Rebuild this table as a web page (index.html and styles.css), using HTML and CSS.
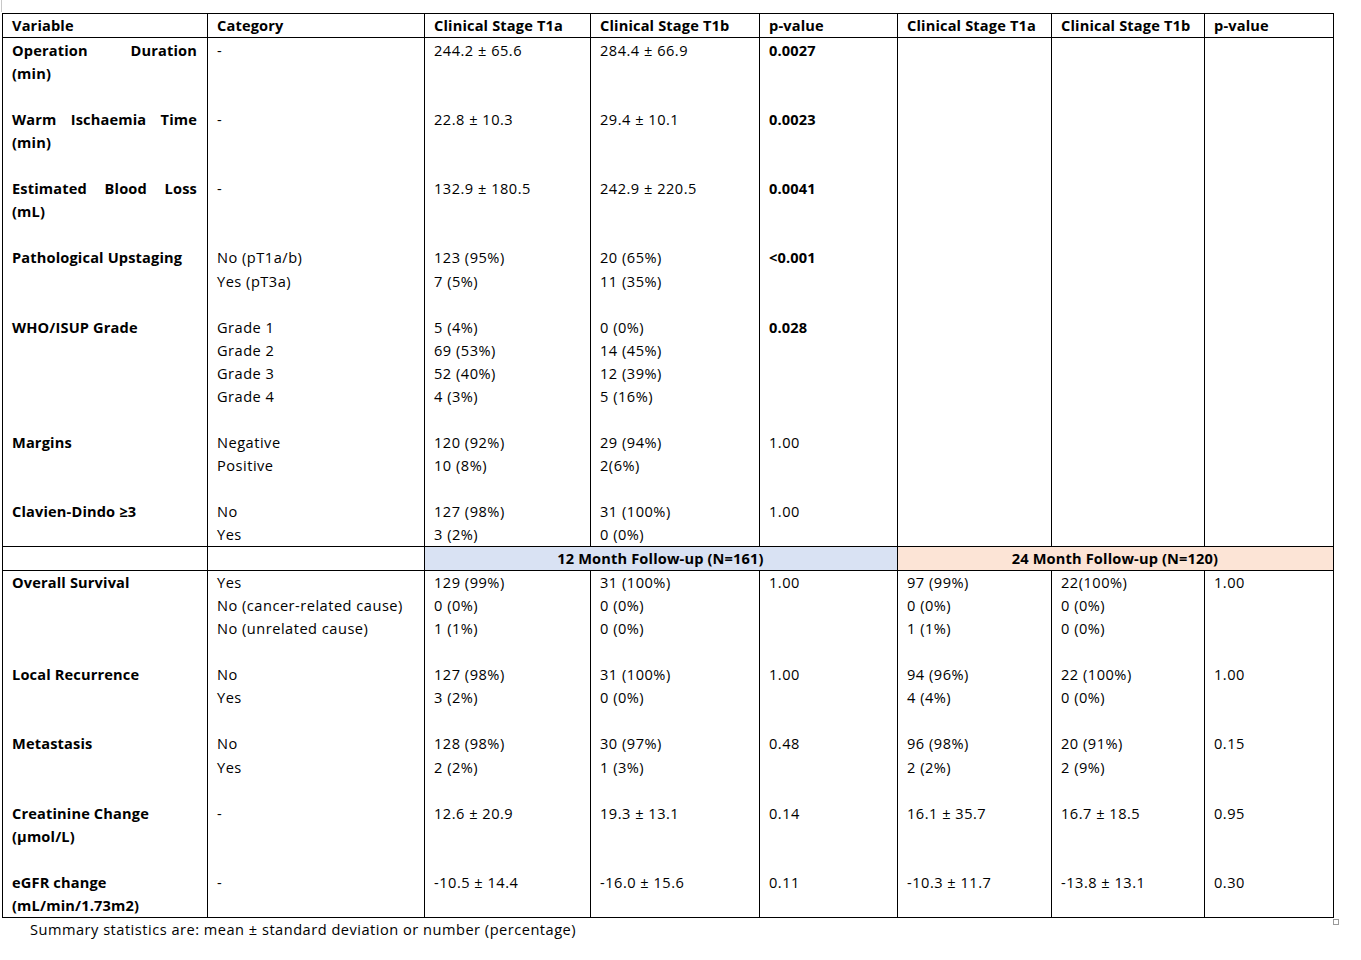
FILE: index.html
```html
<!DOCTYPE html>
<html lang="en">
<head>
<meta charset="utf-8">
<title>Table</title>
<link rel="stylesheet" href="styles.css">
</head>
<body>
<div class="page">
  <div class="edge-mark"></div>
  <div class="table-wrap">
    <table class="stats">
      <colgroup>
        <col class="c-var"><col class="c-cat"><col class="c-a"><col class="c-b"><col class="c-p">
        <col class="c-a2"><col class="c-b2"><col class="c-p2">
      </colgroup>
      <thead>
        <tr class="head">
          <th>Variable</th><th>Category</th><th>Clinical Stage T1a</th><th>Clinical Stage T1b</th><th>p-value</th>
          <th>Clinical Stage T1a</th><th>Clinical Stage T1b</th><th>p-value</th>
        </tr>
      </thead>
      <tbody>
        <tr class="gap first">
          <td class="var"><span class="jline">Operation Duration</span>(min)</td><td>-</td><td>244.2 ± 65.6</td><td>284.4 ± 66.9</td><td class="b">0.0027</td><td></td><td></td><td></td>
        </tr>
        <tr class="gap">
          <td class="var"><span class="jline">Warm Ischaemia Time</span>(min)</td><td>-</td><td>22.8 ± 10.3</td><td>29.4 ± 10.1</td><td class="b">0.0023</td><td></td><td></td><td></td>
        </tr>
        <tr class="gap">
          <td class="var"><span class="jline">Estimated Blood Loss</span>(mL)</td><td>-</td><td>132.9 ± 180.5</td><td>242.9 ± 220.5</td><td class="b">0.0041</td><td></td><td></td><td></td>
        </tr>
        <tr class="gap">
          <td class="var">Pathological Upstaging</td><td>No (pT1a/b)<br>Yes (pT3a)</td><td>123 (95%)<br>7 (5%)</td><td>20 (65%)<br>11 (35%)</td><td class="b">&lt;0.001</td><td></td><td></td><td></td>
        </tr>
        <tr class="gap">
          <td class="var">WHO/ISUP Grade</td><td>Grade 1<br>Grade 2<br>Grade 3<br>Grade 4</td><td>5 (4%)<br>69 (53%)<br>52 (40%)<br>4 (3%)</td><td>0 (0%)<br>14 (45%)<br>12 (39%)<br>5 (16%)</td><td class="b">0.028</td><td></td><td></td><td></td>
        </tr>
        <tr class="gap">
          <td class="var">Margins</td><td>Negative<br>Positive</td><td>120 (92%)<br>10 (8%)</td><td>29 (94%)<br>2(6%)</td><td>1.00</td><td></td><td></td><td></td>
        </tr>
        <tr>
          <td class="var">Clavien-Dindo ≥3</td><td>No<br>Yes</td><td>127 (98%)<br>3 (2%)</td><td>31 (100%)<br>0 (0%)</td><td>1.00</td><td></td><td></td><td></td>
        </tr>
        <tr class="follow">
          <td></td><td></td>
          <td colspan="3" class="fu12">12 Month Follow-up (N=161)</td>
          <td colspan="3" class="fu24">24 Month Follow-up (N=120)</td>
        </tr>
        <tr class="gap">
          <td class="var">Overall Survival</td><td>Yes<br>No (cancer-related cause)<br>No (unrelated cause)</td><td>129 (99%)<br>0 (0%)<br>1 (1%)</td><td>31 (100%)<br>0 (0%)<br>0 (0%)</td><td>1.00</td><td>97 (99%)<br>0 (0%)<br>1 (1%)</td><td>22(100%)<br>0 (0%)<br>0 (0%)</td><td>1.00</td>
        </tr>
        <tr class="gap">
          <td class="var">Local Recurrence</td><td>No<br>Yes</td><td>127 (98%)<br>3 (2%)</td><td>31 (100%)<br>0 (0%)</td><td>1.00</td><td>94 (96%)<br>4 (4%)</td><td>22 (100%)<br>0 (0%)</td><td>1.00</td>
        </tr>
        <tr class="gap">
          <td class="var">Metastasis</td><td>No<br>Yes</td><td>128 (98%)<br>2 (2%)</td><td>30 (97%)<br>1 (3%)</td><td>0.48</td><td>96 (98%)<br>2 (2%)</td><td>20 (91%)<br>2 (9%)</td><td>0.15</td>
        </tr>
        <tr class="gap">
          <td class="var">Creatinine Change<br>(µmol/L)</td><td>-</td><td>12.6 ± 20.9</td><td>19.3 ± 13.1</td><td>0.14</td><td>16.1 ± 35.7</td><td>16.7 ± 18.5</td><td>0.95</td>
        </tr>
        <tr>
          <td class="var">eGFR change<br>(mL/min/1.73m2)</td><td>-</td><td>-10.5 ± 14.4</td><td>-16.0 ± 15.6</td><td>0.11</td><td>-10.3 ± 11.7</td><td>-13.8 ± 13.1</td><td>0.30</td>
        </tr>
      </tbody>
    </table>
    <span class="handle"></span>
  </div>
  <p class="note">Summary statistics are: mean ± standard deviation or number (percentage)</p>
</div>
</body>
</html>
```
FILE: styles.css
```css
html, body {
  margin: 0;
  padding: 0;
  background: #ffffff;
}
body {
  font-family: "Open Sans", Lato, "Liberation Sans", sans-serif;
  font-size: 14.6px;
  letter-spacing: 0.5px;
  color: #000000;
}
.page {
  position: relative;
  padding: 13px 0 0 2px;
}
.edge-mark {
  position: absolute;
  left: 1px;
  top: 0;
  width: 1px;
  height: 12px;
  background: #c8c8c8;
}
.table-wrap {
  position: relative;
  width: 1331px;
}
.stats {
  border-collapse: collapse;
  table-layout: fixed;
  width: 1331px;
  line-height: 23.05px;
}
.c-var { width: 205px; }
.c-cat { width: 217px; }
.c-a { width: 166px; }
.c-b { width: 169px; }
.c-p { width: 138px; }
.c-a2 { width: 154px; }
.c-b2 { width: 153px; }
.c-p2 { width: 129px; }
.stats th,
.stats td {
  border-left: 1px solid #000;
  border-right: 1px solid #000;
  padding: 0 10px 0 9px;
  vertical-align: top;
  text-align: left;
  white-space: nowrap;
}
.stats th {
  font-weight: 700;
  letter-spacing: 0.15px;
  border-top: 1px solid #000;
  border-bottom: 1px solid #000;
}
.stats tr.gap td {
  padding-bottom: 23.05px;
}
.stats tr.first td {
  padding-top: 1px;
}
.stats td.var {
  font-weight: 700;
  letter-spacing: 0.15px;
  white-space: normal;
}
.jline {
  display: block;
  text-align: justify;
  text-align-last: justify;
}
.stats td.b {
  font-weight: 700;
  letter-spacing: 0.15px;
}
.stats tr.follow td {
  border-top: 1px solid #000;
  border-bottom: 1px solid #000;
}
.stats td.fu12,
.stats td.fu24 {
  text-align: center;
  font-weight: 700;
  letter-spacing: 0.15px;
}
.stats td.fu12 {
  background: #d9e2f3;
}
.stats td.fu24 {
  background: #fce4d6;
}
.stats tbody tr:last-child td {
  border-bottom: 1px solid #000;
}
.handle {
  position: absolute;
  right: -6px;
  bottom: -7px;
  width: 4px;
  height: 4px;
  border: 1px solid #9a9a9a;
  background: #fff;
}
.note {
  margin: 0;
  padding-left: 28px;
  line-height: 23px;
}
```
